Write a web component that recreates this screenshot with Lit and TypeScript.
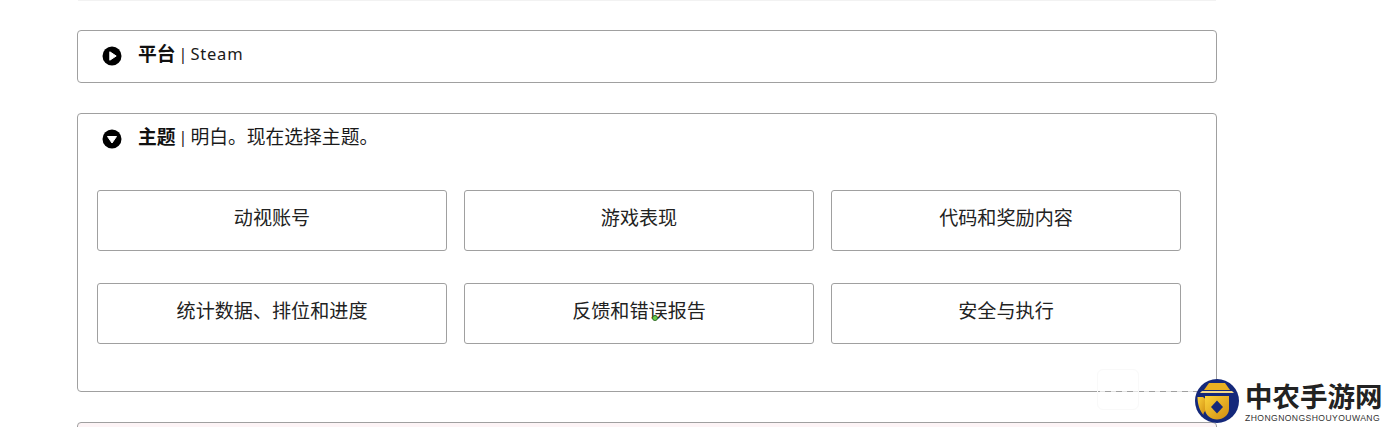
import { LitElement, html, css } from "lit";
import { customElement } from "lit/decorators.js";

const rows = [
  ["动视账号", "游戏表现", "代码和奖励内容"],
  ["统计数据、排位和进度", "反馈和错误报告", "安全与执行"],
];

@customElement("app-root")
export class AppRoot extends LitElement {
  static styles = css`
    :host {
      display: block;
      position: relative;
      height: 427px;
      overflow: hidden;
      background: #fff;
      font-family: "Noto Sans", "Noto Sans CJK SC", sans-serif;
      color: #1a1a1a;
    }
    .page {
      width: 1140px;
      margin-left: 77px;
      display: flex;
      flex-direction: column;
    }
    .rule {
      height: 1px;
      margin: 0 1px 29px;
      background: #f2f2f2;
    }
    .card {
      border: 1px solid #a0a0a0;
      border-radius: 4px;
      box-sizing: border-box;
      margin-bottom: 30px;
    }
    .c1 { height: 53px; }
    .c2 { height: 279px; }
    .c3 { height: 40px; background: #fdf4f6; margin-bottom: 0; }
    .head {
      display: flex;
      align-items: flex-start;
      padding: 10px 0 0 24px;
      height: 26px;
      font-size: 18.8px;
      line-height: 26px;
    }
    .head svg { margin: 5px 16px 0 0; flex: none; }
    .head b { font-weight: 700; color: #111; }
    .sep { margin: 0 3px; font-size: 16px; }
    .latin { font-size: 16.5px; letter-spacing: 0.8px; }
    .grid {
      display: grid;
      grid-template-columns: repeat(3, 350px);
      grid-auto-rows: 61px;
      column-gap: 17px;
      row-gap: 32px;
      padding: 40px 0 0 19px;
    }
    .btn {
      border: 1px solid #a0a0a0;
      border-radius: 3px;
      box-sizing: border-box;
      display: flex;
      align-items: center;
      justify-content: center;
      font-size: 19.1px;
      padding-bottom: 8px;
      color: #222;
      white-space: nowrap;
    }
    .dot {
      position: absolute;
      left: 652px;
      top: 315px;
      width: 6px;
      height: 6px;
      border-radius: 50%;
      background: #6fce4f;
      border: 1px solid #2f6b24;
      box-sizing: border-box;
    }
    .ghost {
      position: absolute;
      left: 1097px;
      top: 369px;
      width: 42px;
      height: 41px;
      border: 1px solid #f9f9f9;
      border-radius: 6px;
      box-sizing: border-box;
    }
    .haze {
      position: absolute;
      left: 1100px;
      top: 389px;
      width: 95px;
      height: 5px;
      background: repeating-linear-gradient(90deg, rgba(255,255,255,.7) 0 5px, rgba(255,255,255,0) 5px 11px);
    }
    .mark {
      position: absolute;
      left: 1195px;
      top: 379px;
      display: flex;
      align-items: center;
      gap: 6px;
    }
    .brand { display: flex; flex-direction: column; }
    .zh {
      font-family: "Noto Sans CJK SC", sans-serif;
      font-weight: 700;
      font-size: 27.5px;
      line-height: 30px;
      color: #222;
      white-space: nowrap;
    }
    .en {
      font-family: "Liberation Sans", sans-serif;
      font-size: 8.6px;
      line-height: 10px;
      margin-top: 3px;
      color: #333;
      white-space: nowrap;
      letter-spacing: 0.42px;
    }
  `;

  private icon(down: boolean) {
    return html`<svg width="20" height="20" viewBox="0 0 20 20">
      <circle cx="10" cy="10" r="9.5" fill="#000"></circle>
      <path
        fill="#fff"
        stroke="#fff"
        stroke-width="1"
        stroke-linejoin="round"
        d=${down ? "M5.5 7.5H14.5L10 14Z" : "M7.8 5.8V14.2L14.2 10Z"}
      ></path>
    </svg>`;
  }

  render() {
    return html`
      <div class="page">
        <div class="rule"></div>
        <section class="card c1">
          <div class="head">
            ${this.icon(false)}<b>平台</b><span class="sep">|</span><span class="latin">Steam</span>
          </div>
        </section>
        <section class="card c2">
          <div class="head">
            ${this.icon(true)}<b>主题</b><span class="sep">|</span><span>明白。现在选择主题。</span>
          </div>
          <div class="grid">
            ${rows.flat().map((t) => html`<div class="btn">${t}</div>`)}
          </div>
        </section>
        <section class="card c3"></section>
      </div>
      <div class="dot"></div>
      <div class="ghost"></div>
      <div class="haze"></div>
      <div class="mark">
        <svg width="44" height="44" viewBox="0 0 44 44">
          <defs>
            <linearGradient id="g" x1="0" y1="0" x2="1" y2="1">
              <stop offset="0" stop-color="#fbd23a"></stop>
              <stop offset="1" stop-color="#d08c10"></stop>
            </linearGradient>
          </defs>
          <circle cx="22" cy="22" r="22" fill="#14287a"></circle>
          <path fill="#e9b022" d="M14 4H30L35 11H9Z"></path>
          <path fill="#f4d98a" d="M7 12H37L39 14H5Z"></path>
          <path fill="#14287a" d="M4 14H40V16.5H4Z"></path>
          <path fill="url(#g)" d="M2.5 18H8L11 20.5V31C9 33 8 35 8.5 36C4.5 31.5 2.5 25 2.5 18Z"></path>
          <path fill="url(#g)" d="M10 17H34V30C34 36 28 40.5 22 40.5C16 40.5 10 36 10 30Z"></path>
          <path fill="#14287a" d="M22 21.5L28 28L22 34.5L16 28Z"></path>
        </svg>
        <div class="brand">
          <div class="zh">中农手游网</div>
          <div class="en">ZHONGNONGSHOUYOUWANG</div>
        </div>
      </div>
    `;
  }
}
